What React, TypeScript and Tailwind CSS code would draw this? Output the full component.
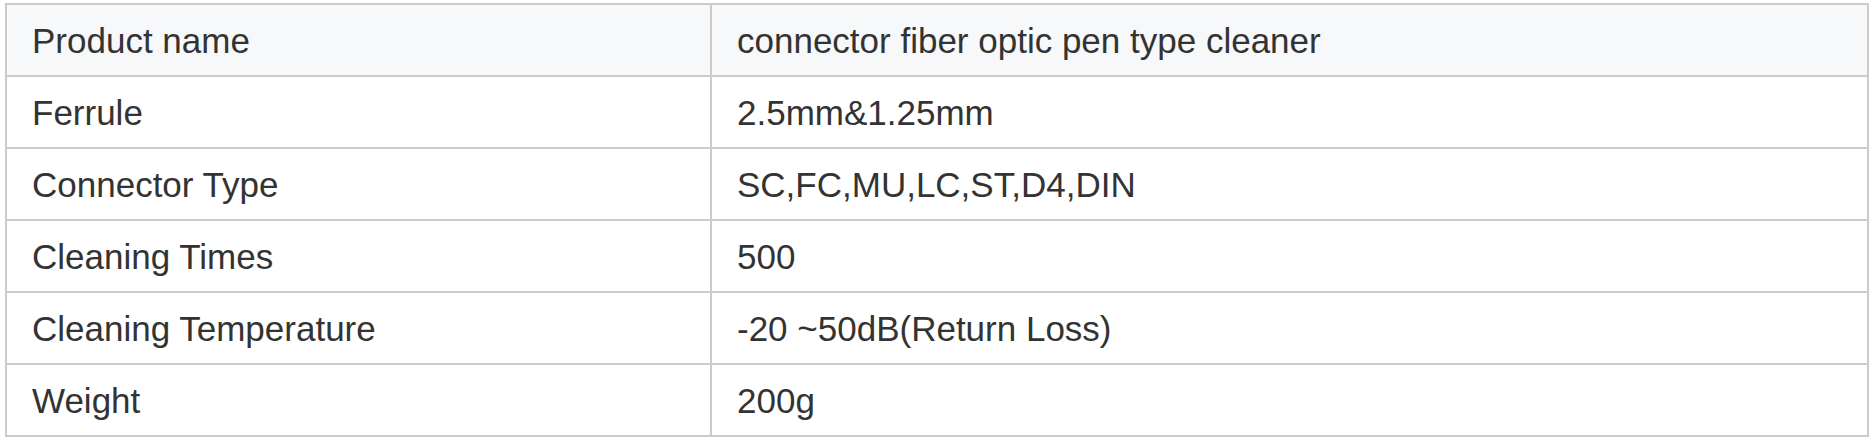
import React from "react";

const rows: [string, string][] = [
  ["Product name", "connector fiber optic pen type cleaner"],
  ["Ferrule", "2.5mm&1.25mm"],
  ["Connector Type", "SC,FC,MU,LC,ST,D4,DIN"],
  ["Cleaning Times", "500"],
  ["Cleaning Temperature", "-20 ~50dB(Return Loss)"],
  ["Weight", "200g"],
];

const App: React.FC = () => {
  return (
    <div className="bg-white w-[1874px] h-[442px] pl-[5px] pt-[3px]">
      <table
        className="border-collapse w-[1864px] text-[#333333] text-[35px]"
        style={{ fontFamily: '"Liberation Sans", Arial, sans-serif' }}
      >
        <tbody>
          {rows.map(([label, value], i) => (
            <tr key={label} className={i === 0 ? "bg-[#f7f8fa]" : "bg-white"}>
              <td className="w-[705px] h-[72px] pl-[25px] pr-[24px] py-0 border-2 border-[#cbcbcb] leading-none align-middle">
                {label}
              </td>
              <td className="h-[72px] px-[25px] py-0 border-2 border-[#cbcbcb] leading-none align-middle">
                {value}
              </td>
            </tr>
          ))}
        </tbody>
      </table>
    </div>
  );
};

export default App;
